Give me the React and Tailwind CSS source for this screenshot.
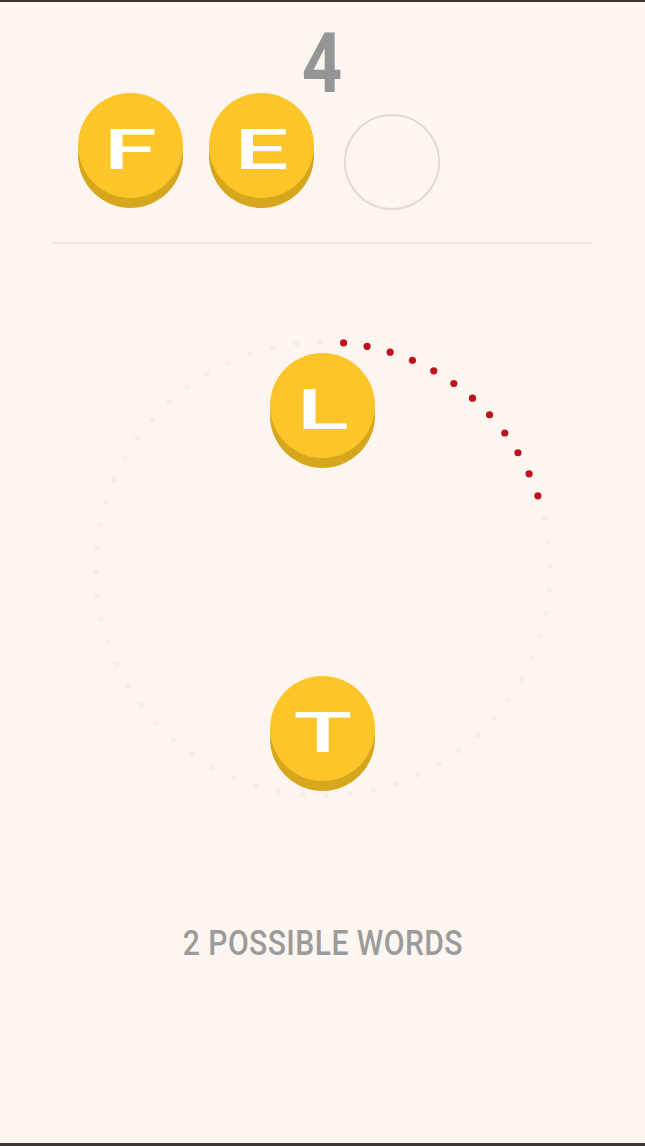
const RING_R = 227;
const dots = Array.from({ length: 60 }, (_, i) => {
  const a = ((5.2 + 6 * i) * Math.PI) / 180;
  return {
    x: 235 + RING_R * Math.sin(a),
    y: 235 - RING_R * Math.cos(a),
    active: i < 12,
  };
});

function Token({ letter }) {
  return (
    <div className="relative w-[105px] h-[115px] shrink-0">
      <div className="absolute left-0 bottom-0 w-[105px] h-[105px] rounded-full bg-[#d6a71d]" />
      <div className="relative w-[105px] h-[105px] rounded-full bg-[#fcc62a] flex items-center justify-center">
        <span className="text-white font-['Roboto',sans-serif] font-medium text-[55px] leading-none scale-x-[1.75] translate-y-[5px]">
          {letter}
        </span>
      </div>
    </div>
  );
}

function Ring() {
  return (
    <svg className="absolute inset-0" width="470" height="470" viewBox="0 0 470 470">
      {dots.map((d, i) => (
        <circle
          key={i}
          cx={d.x}
          cy={d.y}
          r={d.active ? 3.6 : 3}
          fill={d.active ? "#c0121c" : "#f6eee9"}
        />
      ))}
    </svg>
  );
}

export default function App() {
  return (
    <div className="h-[1146px] bg-[#fdf6f0] border-t-2 border-b-[3px] border-[#3d3733] flex flex-col overflow-hidden">
      <div className="h-[91px] pt-[20px] flex justify-center">
        <span className="font-['Roboto',sans-serif] font-bold text-[84px] leading-none text-[#959595] scale-x-[0.84]">
          4
        </span>
      </div>

      <div className="flex items-end pl-[78px]">
        <Token letter="F" />
        <div className="ml-[26px]">
          <Token letter="E" />
        </div>
        <div className="ml-[30px] mb-[-2px] w-[96px] h-[96px] rounded-full border-2 border-[#dfdad6]" />
      </div>

      <div className="mt-[34px] mx-[52px] h-[2px] bg-[#ebe6e1]" />

      <div className="relative mt-[90px] mx-auto w-[470px] h-[470px]">
        <Ring />
        <div className="relative flex flex-col items-center pt-[19px] gap-[208px]">
          <Token letter="L" />
          <Token letter="T" />
        </div>
      </div>

      <div className="mt-[122px] flex justify-center">
        <span className="font-['Roboto',sans-serif] font-medium text-[35px] leading-none tracking-[0.5px] text-[#9b9b9b] scale-x-[0.86]">
          2 POSSIBLE WORDS
        </span>
      </div>
    </div>
  );
}
